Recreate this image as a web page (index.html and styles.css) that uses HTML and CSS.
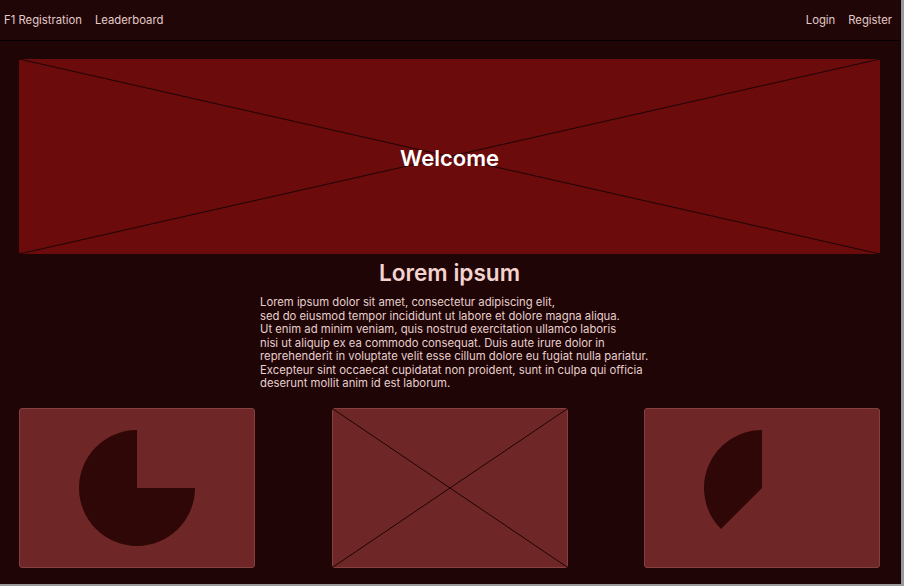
FILE: index.html
```html
<!DOCTYPE html>
<html lang="en">
<head>
<meta charset="utf-8">
<title>F1 Registration</title>
<link rel="stylesheet" href="styles.css">
</head>
<body>
<div class="page">
  <nav class="nav">
    <div class="nav-group">
      <a class="nav-link" href="#">F1 Registration</a>
      <a class="nav-link" href="#">Leaderboard</a>
    </div>
    <div class="nav-group">
      <a class="nav-link" href="#">Login</a>
      <a class="nav-link" href="#">Register</a>
    </div>
  </nav>
  <main class="main">
    <section class="hero">
      <svg class="cross" viewBox="0 0 100 100" preserveAspectRatio="none" aria-hidden="true">
        <line x1="0" y1="0" x2="100" y2="100" vector-effect="non-scaling-stroke"/>
        <line x1="100" y1="0" x2="0" y2="100" vector-effect="non-scaling-stroke"/>
      </svg>
      <h1 class="hero-title">Welcome</h1>
    </section>
    <h2 class="heading">Lorem ipsum</h2>
    <p class="text">Lorem ipsum dolor sit amet, consectetur adipiscing elit,<br>sed do eiusmod tempor incididunt ut labore et dolore magna aliqua.<br>Ut enim ad minim veniam, quis nostrud exercitation ullamco laboris<br>nisi ut aliquip ex ea commodo consequat. Duis aute irure dolor in<br>reprehenderit in voluptate velit esse cillum dolore eu fugiat nulla pariatur.<br>Excepteur sint occaecat cupidatat non proident, sunt in culpa qui officia<br>deserunt mollit anim id est laborum.</p>
    <div class="cards">
      <div class="card">
        <svg class="pie" viewBox="0 0 120 120" aria-hidden="true">
          <path d="M60 60 L60 2 A58 58 0 1 0 118 60 Z"/>
        </svg>
      </div>
      <div class="card">
        <svg class="cross" viewBox="0 0 100 100" preserveAspectRatio="none" aria-hidden="true">
          <line x1="0" y1="0" x2="100" y2="100" vector-effect="non-scaling-stroke"/>
          <line x1="100" y1="0" x2="0" y2="100" vector-effect="non-scaling-stroke"/>
        </svg>
      </div>
      <div class="card">
        <svg class="pie" viewBox="0 0 120 120" aria-hidden="true">
          <path d="M60 60 L60 2 A58 58 0 0 0 18.99 101.01 Z"/>
        </svg>
      </div>
    </div>
  </main>
</div>
</body>
</html>
```
FILE: styles.css
```css
html {
  background: #9a9a9a;
}
body {
  margin: 0;
  font-family: Inter, "Noto Sans", "Liberation Sans", sans-serif;
}
.page {
  width: 901px;
  height: 584px;
  background: #1f0506;
  overflow: hidden;
  border-right: 1px solid #0e0202;
  box-sizing: border-box;
}
.nav {
  height: 41px;
  box-sizing: border-box;
  border-bottom: 1px solid #050000;
  display: flex;
  justify-content: space-between;
  align-items: center;
  padding: 0 8px 1px 4px;
  background: #200607;
}
.nav-group {
  display: flex;
  gap: 13px;
}
.nav-link {
  color: #e3cbc9;
  text-decoration: none;
  font-size: 11.3px;
  line-height: 16px;
}
.main {
  padding: 18px 20px 0 19px;
}
.hero {
  position: relative;
  height: 195px;
  background: #6b0b0b;
  border-radius: 2px;
  display: flex;
  align-items: center;
  justify-content: center;
}
.cross {
  position: absolute;
  inset: 0;
  width: 100%;
  height: 100%;
}
.cross line {
  stroke: #1e0405;
  stroke-width: 1;
}
.hero-title {
  position: relative;
  margin: 2px 0 0;
  color: #ffffff;
  font-size: 22px;
  font-weight: 600;
  line-height: 28px;
}
.heading {
  margin: 5px 0 0;
  text-align: center;
  color: #f4d3cf;
  font-size: 22.6px;
  font-weight: 600;
  line-height: 28px;
}
.text {
  margin: 9px 0 0 241px;
  color: #e6cfcd;
  font-size: 11.3px;
  line-height: 13.5px;
}
.cards {
  margin-top: 17px;
  display: flex;
  justify-content: space-between;
}
.card {
  position: relative;
  width: 236px;
  height: 160px;
  box-sizing: border-box;
  background: #6f2626;
  border: 1px solid #83403f;
  border-radius: 3px;
  display: flex;
  align-items: center;
  justify-content: center;
}
.pie {
  width: 120px;
  height: 120px;
}
.pie path {
  fill: #2e0706;
}
```
